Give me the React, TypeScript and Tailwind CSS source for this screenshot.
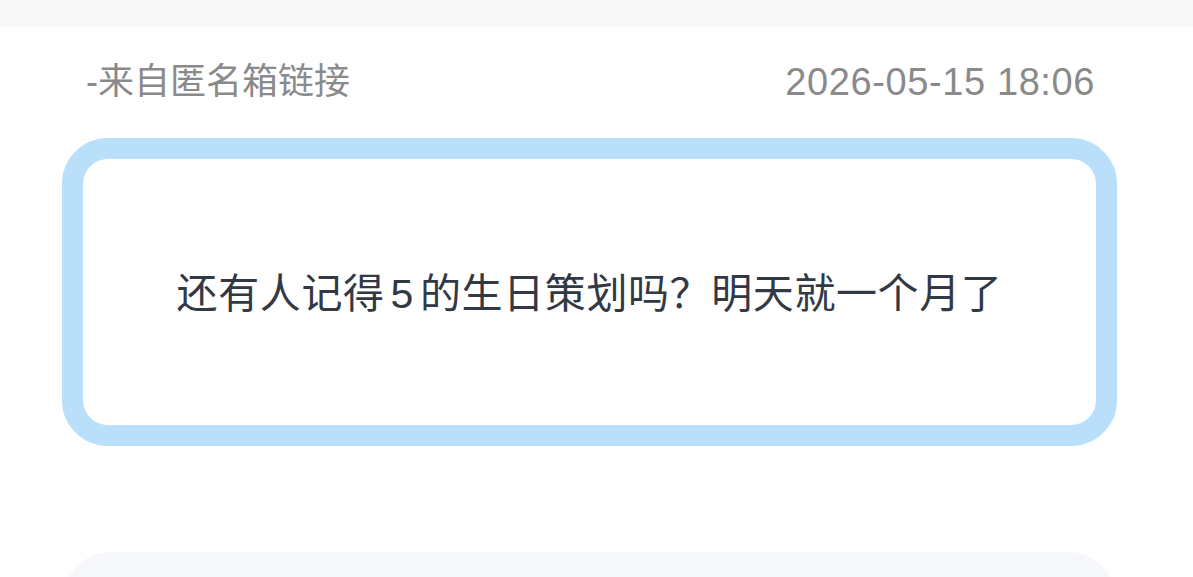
export default function App() {
  const font = { fontFamily: '"Helvetica Neue", "Liberation Sans", "Noto Sans CJK SC", sans-serif' };
  return (
    <div className="w-[1193px] h-[577px] overflow-hidden bg-white" style={font}>
      <div className="h-[27px] bg-[#f8f8f8]" />
      <div className="flex items-center justify-between pl-[86px] pr-[98px] pt-[20px] h-[90px]">
        <span className="text-[36px] text-[#8a8a8a] leading-none">-来自匿名箱链接</span>
        <span className="text-[38px] tracking-[0.6px] text-[#8a8a8a] leading-none">2026-05-15 18:06</span>
      </div>
      <div className="ml-[62px] mr-[76px] mt-[21px] h-[308px] rounded-[46px] border-[21px] border-[#b9dffb] flex items-center justify-center">
        <p className="text-[41px] tracking-[0.6px] text-[#323945] leading-none pt-[4px]">
          还有人记得<span className="mx-[6px]">5</span>的生日策划吗？明天就一个月了
        </p>
      </div>
      <div className="ml-[64px] mr-[78px] mt-[106px] h-[120px] rounded-[46px] bg-[#f7f8fc]" />
    </div>
  );
}
